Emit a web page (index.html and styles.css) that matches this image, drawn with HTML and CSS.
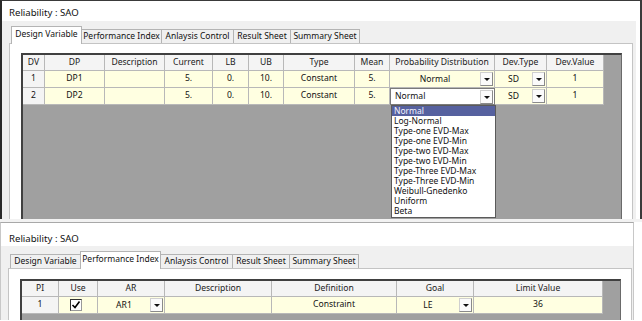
FILE: index.html
```html
<!DOCTYPE html>
<html>
<head>
<meta charset="utf-8">
<link rel="stylesheet" href="styles.css">
</head>
<body>
<div class="win win1">
  <div class="title">Reliability : SAO</div>
  <div class="body">
    <div class="tabs">
      <div class="tab t1 sel">Design Variable</div>
      <div class="tab t2">Performance Index</div>
      <div class="tab t3">Anlaysis Control</div>
      <div class="tab t4">Result Sheet</div>
      <div class="tab t5">Summary Sheet</div>
    </div>
    <div class="panel p1">
      <div class="grid g1">
        <div class="row head">
          <div class="c w22">DV</div><div class="c w60">DP</div><div class="c w60">Description</div><div class="c w48">Current</div><div class="c w36">LB</div><div class="c w35">UB</div><div class="c w71">Type</div><div class="c w35">Mean</div><div class="c w105">Probability Distribution</div><div class="c w52">Dev.Type</div><div class="c w57">Dev.Value</div>
        </div>
        <div class="row">
          <div class="c w22 rh">1</div><div class="c w60">DP1</div><div class="c w60"></div><div class="c w48">5.</div><div class="c w36">0.</div><div class="c w35">10.</div><div class="c w71">Constant</div><div class="c w35">5.</div>
          <div class="c w105 combo"><span class="ctext">Normal</span><span class="btn"></span></div>
          <div class="c w52 combo"><span class="ctext">SD</span><span class="btn"></span></div>
          <div class="c w57">1</div>
        </div>
        <div class="row">
          <div class="c w22 rh">2</div><div class="c w60">DP2</div><div class="c w60"></div><div class="c w48">5.</div><div class="c w36">0.</div><div class="c w35">10.</div><div class="c w71">Constant</div><div class="c w35">5.</div>
          <div class="c w105 combo open"><span class="ctext left">Normal</span><span class="btn"></span>
            <div class="list">
              <div class="item hi">Normal</div>
              <div class="item">Log-Normal</div>
              <div class="item">Type-one EVD-Max</div>
              <div class="item">Type-one EVD-Min</div>
              <div class="item">Type-two EVD-Max</div>
              <div class="item">Type-two EVD-Min</div>
              <div class="item">Type-Three EVD-Max</div>
              <div class="item">Type-Three EVD-Min</div>
              <div class="item">Weibull-Gnedenko</div>
              <div class="item">Uniform</div>
              <div class="item">Beta</div>
            </div>
          </div>
          <div class="c w52 combo"><span class="ctext">SD</span><span class="btn"></span></div>
          <div class="c w57">1</div>
        </div>
      </div>
    </div>
  </div>
</div>
<div class="gap"></div>
<div class="win win2">
  <div class="title">Reliability : SAO</div>
  <div class="body">
    <div class="tabs">
      <div class="tab t1">Design Variable</div>
      <div class="tab t2 sel">Performance Index</div>
      <div class="tab t3">Anlaysis Control</div>
      <div class="tab t4">Result Sheet</div>
      <div class="tab t5">Summary Sheet</div>
    </div>
    <div class="panel p2">
      <div class="grid g2">
        <div class="row head">
          <div class="c w37">PI</div><div class="c w39">Use</div><div class="c w67">AR</div><div class="c w107">Description</div><div class="c w125">Definition</div><div class="c w77">Goal</div><div class="c w129">Limit Value</div>
        </div>
        <div class="row">
          <div class="c w37 rh">1</div>
          <div class="c w39 usecell"><span class="chk"><svg width="10" height="10" viewBox="0 0 10 10"><path d="M1.5 5 L4 7.5 L8.5 1.5" fill="none" stroke="#000" stroke-width="1.6"/></svg></span></div>
          <div class="c w67 combo"><span class="ctext">AR1</span><span class="btn"></span></div>
          <div class="c w107"></div>
          <div class="c w125">Constraint</div>
          <div class="c w77 combo"><span class="ctext">LE</span><span class="btn"></span></div>
          <div class="c w129">36</div>
        </div>
      </div>
    </div>
  </div>
</div>
</body>
</html>
```
FILE: styles.css
```css
* { box-sizing: border-box; }
body {
  margin: 0;
  width: 642px;
  height: 321px;
  overflow: hidden;
  background: #ffffff;
  font-family: "Noto Sans", "Open Sans", sans-serif;
  color: #111;
}
.win { background: #fff; }
.win1 {
  height: 219px;
  border-top: 1px solid #3a3a3a;
  border-left: 2px solid #2a2a2a;
  border-right: 2px solid #3a3a3a;
  overflow: hidden;
}
.win2 {
  height: 98px;
  border-top: 1px solid #a8a8a8;
  border-left: 1px solid #c8c8c8;
  border-right: 1px solid #c8c8c8;
  margin-right: 8px;
  overflow: hidden;
}
.gap { height: 3px; background: #f2f2f2; }
.title {
  font-size: 9.6px;
  padding-left: 7px;
  white-space: nowrap;
}
.win1 .title { height: 20px; line-height: 24px; }
.win2 .title { height: 23px; line-height: 32px; padding-left: 8px; }
.body {
  background: #f0f0f0;
  padding: 5px 0 0 7px;
  margin-right: 4px;
  height: 200px;
}
.win2 .body { padding-top: 5px; margin-right: 0; }
.tabs {
  display: flex;
  align-items: flex-end;
  padding-left: 2px;
  height: 17px;
  position: relative;
  z-index: 2;
}
.tab {
  height: 14px;
  border: 1px solid #b4b4b4;
  border-bottom: none;
  margin-left: -1px;
  font-size: 8.5px;
  line-height: 12px;
  text-align: center;
  white-space: nowrap;
  background: #f0f0f0;
  color: #111;
}
.tab:first-child { margin-left: 0; }
.tab.sel {
  background: #fff;
  line-height: 13px;
  margin-bottom: -1px;
  height: 18px;
  position: relative;
}
.t1 { width: 71px; }
.t2 { width: 81px; }
.t3 { width: 73px; }
.t4 { width: 58px; }
.t5 { width: 70px; }
.panel {
  background: #fff;
  border: 1px solid #c4c4c4;
  width: 624px;
  height: 200px;
  padding: 9px 10px 0 11px;
  position: relative;
  z-index: 1;
}
.p2 { padding-top: 10px; }
.grid {
  width: 601px;
  height: 190px;
  background: #a0a0a0;
  border-top: 2px solid #404040;
  border-left: 2px solid #404040;
  border-right: 1px solid #6a6a6a;
}
.row { display: flex; height: 17px; }
.head { height: 16px; }
.c {
  flex: none;
  height: 100%;
  background: #ffffe1;
  border-right: 1px solid #b8b8b8;
  border-bottom: 1px solid #b8b8b8;
  font-size: 8.6px;
  line-height: 15px;
  text-align: center;
  white-space: nowrap;
  position: relative;
}
.head .c { background: #f4f4f4; line-height: 14px; color: #222; }
.c.rh { background: #f4f4f4; }
.w22 { width: 22px; } .w35 { width: 35px; } .w36 { width: 36px; } .w37 { width: 37px; }
.w39 { width: 39px; } .w48 { width: 48px; } .w52 { width: 52px; } .w57 { width: 57px; }
.w60 { width: 60px; } .w67 { width: 67px; } .w71 { width: 71px; } .w77 { width: 77px; }
.w105 { width: 105px; } .w107 { width: 107px; } .w125 { width: 125px; } .w129 { width: 129px; }
.combo { display: flex; align-items: center; padding-right: 1px; }
.ctext { flex: 1; text-align: center; }
.ctext.left { text-align: left; padding-left: 4px; }
.btn {
  flex: none;
  width: 13px;
  height: 14px;
  background: #fbfbfb;
  border: 1px solid #d0d0d0;
  border-right-color: #8a8a8a;
  border-bottom-color: #8a8a8a;
  position: relative;
}
.btn::after {
  content: "";
  position: absolute;
  left: 3px;
  top: 5px;
  border-left: 3px solid transparent;
  border-right: 3px solid transparent;
  border-top: 3px solid #111;
}
.combo.open {
  background: #fff;
  border: 1px solid #7a7a7a;
  border-right: 1px solid #7a7a7a;
}
.list {
  position: absolute;
  left: 0;
  top: 16px;
  width: 105px;
  background: #fff;
  border: 1px solid #5a5a5a;
  z-index: 5;
  padding-bottom: 1px;
}
.item {
  height: 10px;
  font-size: 8.5px;
  line-height: 10px;
  text-align: left;
  padding-left: 2px;
  color: #111;
}
.item.hi { background: #56619f; color: #f4f4ff; }
.usecell { display: flex; align-items: center; justify-content: center; padding-right: 4px; }
.chk {
  width: 12px;
  height: 12px;
  background: #fff;
  border: 1px solid #999;
  border-left-color: #333;
  border-top-color: #333;
  display: flex;
  align-items: center;
  justify-content: center;
}
```
